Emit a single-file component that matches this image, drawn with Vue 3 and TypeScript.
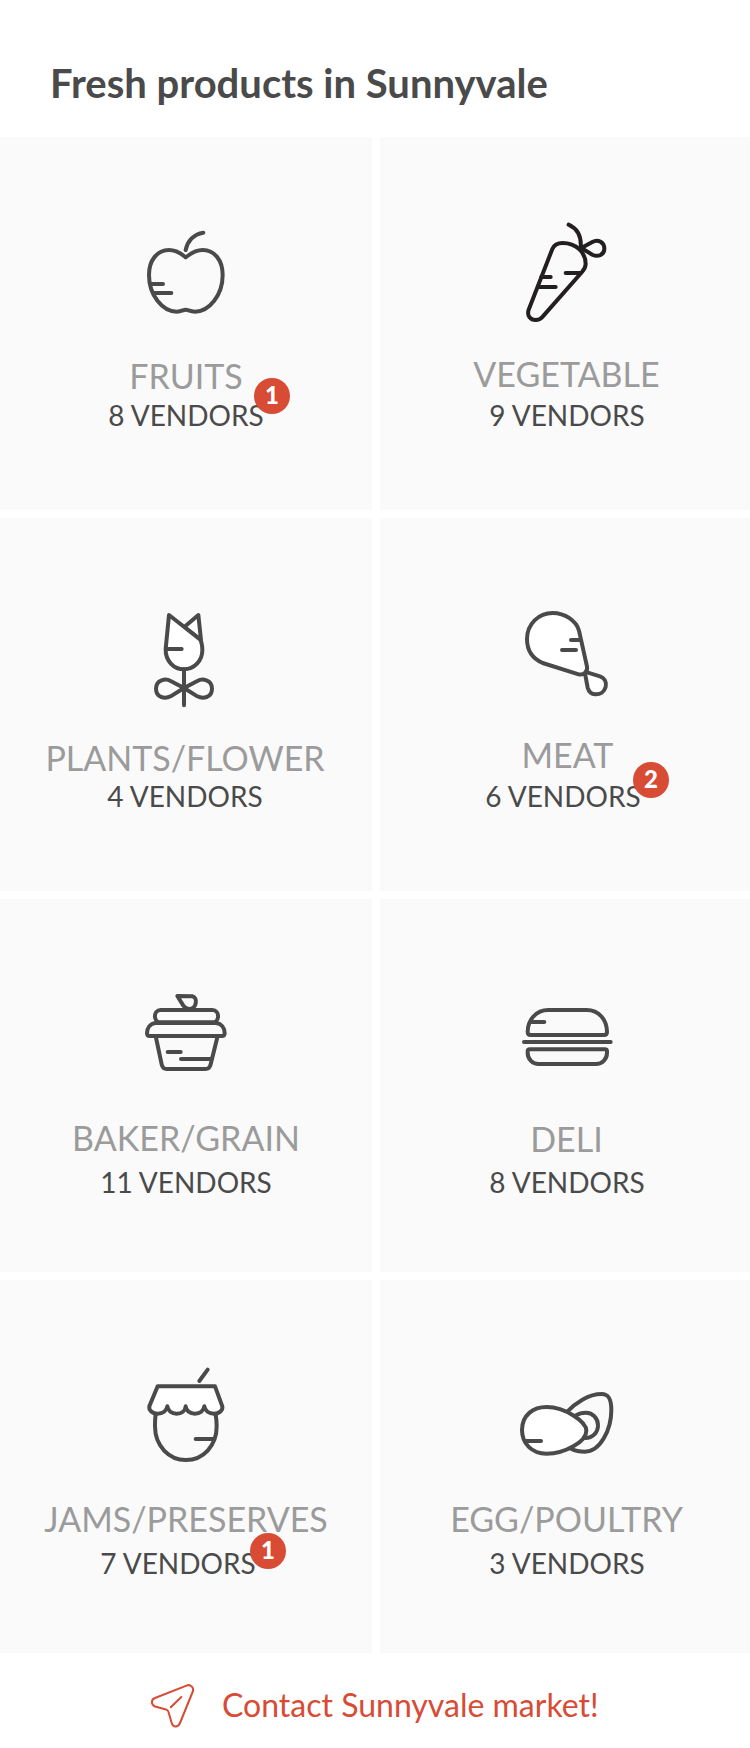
<script setup lang="ts">
interface Shape {
  d: string
  filled?: boolean
}

interface Category {
  id: string
  name: string
  vendors: number
  badge?: number
  // vertical spacing above the name and above the vendor count
  nameGap: number
  vendorGap: number
  // horizontal optical offsets from the card's centre line
  nameShift?: number
  vendorShift?: number
  badgeX?: number
  badgeY?: number
  iconTop: number
  shapes: Shape[]
}

const categories: Category[] = [
  {
    id: 'fruits', name: 'FRUITS', vendors: 8, badge: 1, nameGap: 21, vendorGap: 2,
    badgeX: 254, badgeY: 241, iconTop: 0,
    shapes: [
      { d: 'M167 127C155 118 143 105 117 105C82 105 57 135 57 180C57 240 97 290 140 290C155 290 160 284 167 284C174 284 180 290 195 290C238 290 278 240 278 180C278 135 253 105 218 105C192 105 180 118 167 127Z' },
      { d: 'M167 105C172 80 190 57 220 53M62 207H99M70 234H124' },
    ],
  },
  {
    id: 'vegetable', name: 'VEGETABLE', vendors: 9, nameGap: 19, vendorGap: 4, nameShift: 0.5, vendorShift: 1, iconTop: 0,
    shapes: [
      { d: 'M127 102C132 90 142 84 158 84C198 84 227 112 227 147C227 157 222 164 216 171L98 305C93 311 86 315 77 315C62 315 50 303 56 284Z' },
      { d: 'M176 29C200 40 215 62 212 98M214 99L247 81C265 71 283 83 283 101C283 118 265 128 247 119ZM94 186H122M84 216H137M167 174H212' },
    ],
  },
  {
    id: 'plants', name: 'PLANTS/FLOWER', vendors: 4, nameGap: 22, vendorGap: 1, nameShift: -1, vendorShift: -1, iconTop: -12,
    shapes: [
      { d: 'M163 81L205 45L213 120Z', filled: true },
      { d: 'M117 45L210 118C216 128 217 140 217 151C217 182 193 208 162 208C131 208 106 182 107 147Z', filled: true },
      { d: 'M108 147H155M162 208V316M162 264L122 243C108 235 78 238 78 266C78 294 106 297 122 289ZM162 264L202 243C216 235 246 238 246 266C246 294 218 297 202 289Z' },
    ],
  },
  {
    id: 'meat', name: 'MEAT', vendors: 6, badge: 2, nameGap: 19, vendorGap: 4, nameShift: 1.5, vendorShift: -3, badgeX: 253,
    badgeY: 244, iconTop: -12,
    shapes: [
      { d: 'M224 215L270 229C284 234 290 246 287 260C283 276 270 284 256 283C244 282 236 274 233 263Z', filled: true },
      { d: 'M207 92L231 200C234 214 221 227 206 223L98 189C68 176 51 150 51 117C51 72 86 39 128 39C165 39 199 63 207 92Z', filled: true },
      { d: 'M183 120H208M156 150H198' },
    ],
  },
  {
    id: 'baker', name: 'BAKER/GRAIN', vendors: 11, nameGap: 21, vendorGap: 7, iconTop: -9,
    shapes: [
      { d: 'M142 48L187 49C204 52 200 86 180 87C170 88 164 83 160 77Z' },
      { d: 'M92 90H247C270 90 270 127 247 127H92C69 127 69 90 92 90Z' },
      { d: 'M77 129C60 131 51 145 51 160C51 165 54 168 59 168H276C281 168 284 165 284 160C284 145 275 131 258 129Z' },
      { d: 'M77 168L95 253C97 262 101 267 110 267H226C235 267 240 262 242 253L263 168M113 216H152M153 237H245' },
    ],
  },
  {
    id: 'deli', name: 'DELI', vendors: 8, nameGap: 22, vendorGap: 6, nameShift: 0.5, vendorShift: 1, iconTop: -39,
    shapes: [
      { d: 'M53 126C53 90 78 60 115 60H230C267 60 291 90 291 126C291 133 287 135 282 135H62C57 135 53 133 53 126Z' },
      { d: 'M65 96H103M42 156H302' },
      { d: 'M60 178H284C289 178 291 180 291 184V188C291 208 276 222 258 222H86C68 222 53 208 53 188V184C53 180 55 178 60 178Z' },
    ],
  },
  {
    id: 'jams', name: 'JAMS/PRESERVES', vendors: 7, badge: 1, nameGap: 21, vendorGap: 7, vendorShift: -8, badgeX: 250,
    badgeY: 253, iconTop: -6,
    shapes: [
      { d: 'M77 164C75 175 75 185 75 199C75 258 117 300 168 300C219 300 260 258 260 199C260 185 259 175 257 164' },
      { d: 'M83 79L58 139C56 152 68 161 83 161C98 161 110 152 112 139C114 152 125 161 140 161C155 161 166 152 167 139C168 152 180 161 195 161C210 161 221 152 223 139C225 152 237 161 252 161C267 161 279 152 277 139L255 79Z', filled: true },
      { d: 'M197 237H250M208 63L233 29' },
    ],
  },
  {
    id: 'egg', name: 'EGG/POULTRY', vendors: 3, nameGap: 21, vendorGap: 7, nameShift: 0.5, vendorShift: 1, iconTop: -66,
    shapes: [
      { d: 'M172 95C195 70 235 42 275 42C295 42 304 55 304 90C304 150 270 215 225 215C208 215 195 212 183 206' },
      { d: 'M198 106C210 98 222 98 228 98C248 98 264 115 264 136C264 158 248 174 226 174' },
      { d: 'M36 150C36 105 70 81 110 81C165 81 229 125 229 152C229 185 165 221 110 221C65 221 36 190 36 150Z', filled: true },
      { d: 'M45 183H93' },
    ],
  },
]

function offsets(gap: number, shift = 0) {
  return { marginTop: `${gap}px`, marginLeft: `${shift * 2}px` }
}
</script>

<template>
  <main class="page">
    <header class="header">
      <h1 class="heading">Fresh products in Sunnyvale</h1>
    </header>
    <section class="grid">
      <article v-for="c in categories" :key="c.id" class="card" :class="`card--${c.id}`">
        <svg class="icon" :viewBox="`-12 ${c.iconTop} 360 360`" aria-hidden="true">
          <path v-for="(s, i) in c.shapes" :key="i" :d="s.d" :class="{ filled: s.filled }" />
        </svg>
        <h2 class="name" :style="offsets(c.nameGap, c.nameShift)">{{ c.name }}</h2>
        <p class="vendors" :style="offsets(c.vendorGap, c.vendorShift)">{{ c.vendors }} VENDORS</p>
        <span v-if="c.badge" class="badge" :style="{ left: `${c.badgeX}px`, top: `${c.badgeY}px` }">{{ c.badge }}</span>
      </article>
    </section>
    <footer class="contact">
      <svg class="plane" viewBox="0 0 46 48" aria-hidden="true">
        <path d="M36.5 3.6Q39 2.5 41 4Q43.6 5.5 43 9L30 41Q28.5 44.6 25.5 44.5Q22.6 44.3 21.7 41L18.5 30Q18 28 16 27.5L5 24.5Q2 23.3 1.9 20Q2 17 5 16ZM20.8 25.3L31.3 15" />
      </svg>
      <a class="contact-label">Contact Sunnyvale market!</a>
    </footer>
  </main>
</template>

<style>
body {
  margin: 0;
  background: #fff;
}
</style>

<style scoped>
.page {
  width: 750px;
  height: 1748px;
  overflow: hidden;
  background: #fff;
  font-family: Lato, sans-serif;
  color: #4a4a4a;
}
.header {
  height: 137px;
  box-sizing: border-box;
  padding: 59px 0 0 50px;
}
.heading {
  margin: 0;
  font-size: 40px;
  line-height: 48px;
  font-weight: 700;
  white-space: nowrap;
}
.grid {
  display: grid;
  grid-template-columns: 372px 372px;
  grid-auto-rows: 373px;
  gap: 8px;
}
.card {
  position: relative;
  display: flex;
  flex-direction: column;
  align-items: center;
  box-sizing: border-box;
  padding-top: 78px;
  background: #fafafa;
}
.icon {
  flex: none;
  width: 120px;
  height: 120px;
  fill: none;
  stroke: #4a4a4a;
  stroke-width: 12;
  stroke-linecap: round;
  stroke-linejoin: round;
}
.card--vegetable .icon {
  stroke: #231f20;
}
.icon .filled {
  fill: #fff;
}
.name {
  margin: 0;
  font-size: 34px;
  line-height: 40px;
  font-weight: 400;
  color: #9b9b9b;
  white-space: nowrap;
}
.vendors {
  margin: 0;
  font-size: 28px;
  line-height: 34px;
  white-space: nowrap;
}
.badge {
  position: absolute;
  width: 36px;
  height: 36px;
  border-radius: 50%;
  background: #d84b35;
  color: #fff;
  font-size: 24px;
  line-height: 34px;
  font-weight: 900;
  text-align: center;
}
.contact {
  display: flex;
  align-items: center;
  height: 95px;
  padding-left: 150px;
  color: #d84b35;
}
.plane {
  width: 46px;
  height: 48px;
  margin-top: 10px;
  fill: none;
  stroke: currentColor;
  stroke-width: 2;
  stroke-linecap: round;
  stroke-linejoin: round;
}
.contact-label {
  margin: 8px 0 0 26px;
  font-size: 32px;
  line-height: 40px;
  white-space: nowrap;
}
</style>
